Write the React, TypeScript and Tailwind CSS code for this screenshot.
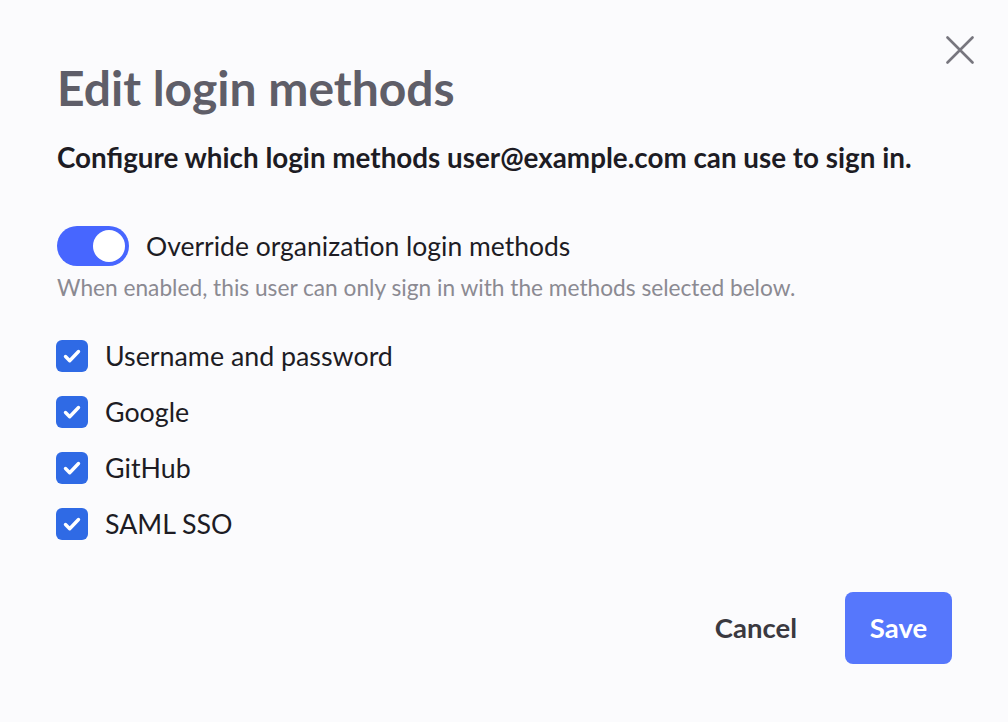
import { useState } from 'react';

const methods = ['Username and password', 'Google', 'GitHub', 'SAML SSO'];

const CloseIcon = () => (
  <svg width="28" height="28" viewBox="0 0 28 28" fill="none" stroke="currentColor" strokeWidth="2.6" strokeLinecap="round">
    <path d="M1.5 1.5l25 25M26.5 1.5l-25 25" />
  </svg>
);

const CheckMark = () => (
  <svg width="20" height="20" viewBox="0 0 20 20" fill="none" stroke="white" strokeWidth="3.4" strokeLinecap="round" strokeLinejoin="round">
    <path d="M3.5 10.5l4.2 4.2 8.8-9.2" />
  </svg>
);

const EditLoginMethods = () => {
  const [override, setOverride] = useState(true);
  const [selected, setSelected] = useState<string[]>(methods);

  const toggleMethod = (m: string) =>
    setSelected((s) => (s.includes(m) ? s.filter((x) => x !== m) : [...s, m]));

  return (
    <div className="relative min-h-[722px] w-[1008px] bg-[#fbfbfd] px-[57px] pt-[58px] font-['Lato',sans-serif]">
      <button className="absolute right-[34px] top-[36px] text-[#77767e]">
        <CloseIcon />
      </button>

      <h1 className="text-[48px] font-bold leading-[60px] text-[#5f5e68]">Edit login methods</h1>
      <p className="mt-[24px] text-[27.8px] font-bold leading-[32px] text-[#1d1c24]">
        Configure which login methods user@example.com can use to sign in.
      </p>

      <div className="mt-[52px] flex items-center gap-[17px]">
        <button
          onClick={() => setOverride(!override)}
          className={`flex h-[40px] w-[72px] items-center rounded-full px-[4px] ${override ? 'justify-end bg-[#4766ff]' : 'justify-start bg-gray-300'}`}
        >
          <span className="block h-[32px] w-[32px] rounded-full bg-white" />
        </button>
        <span className="text-[26.5px] leading-[32px] text-[#1d1c24]">Override organization login methods</span>
      </div>
      <p className="mt-[8px] text-[22.7px] leading-[28px] text-[#8b8a92]">
        When enabled, this user can only sign in with the methods selected below.
      </p>

      <div className="mt-[38px] flex flex-col gap-[24px]">
        {methods.map((m) => (
          <label key={m} className="-ml-[1px] flex cursor-pointer items-center gap-[17px]" onClick={() => toggleMethod(m)}>
            <span
              className={`flex h-[32px] w-[32px] items-center justify-center rounded-[6px] ${selected.includes(m) ? 'bg-[#2f6ae5]' : 'border-2 border-gray-400'}`}
            >
              {selected.includes(m) && <CheckMark />}
            </span>
            <span className="text-[26.8px] leading-[32px] text-[#1d1c24]">{m}</span>
          </label>
        ))}
      </div>

      <div className="mt-[52px] flex items-center justify-end gap-[48px] -mr-[1px]">
        <button className="text-[27.5px] font-bold text-[#3a3940]">Cancel</button>
        <button className="h-[72px] w-[107px] rounded-[8px] bg-[#5677fc] text-[27.5px] font-bold text-white">Save</button>
      </div>
    </div>
  );
};

export default function App() {
  return <EditLoginMethods />;
}
